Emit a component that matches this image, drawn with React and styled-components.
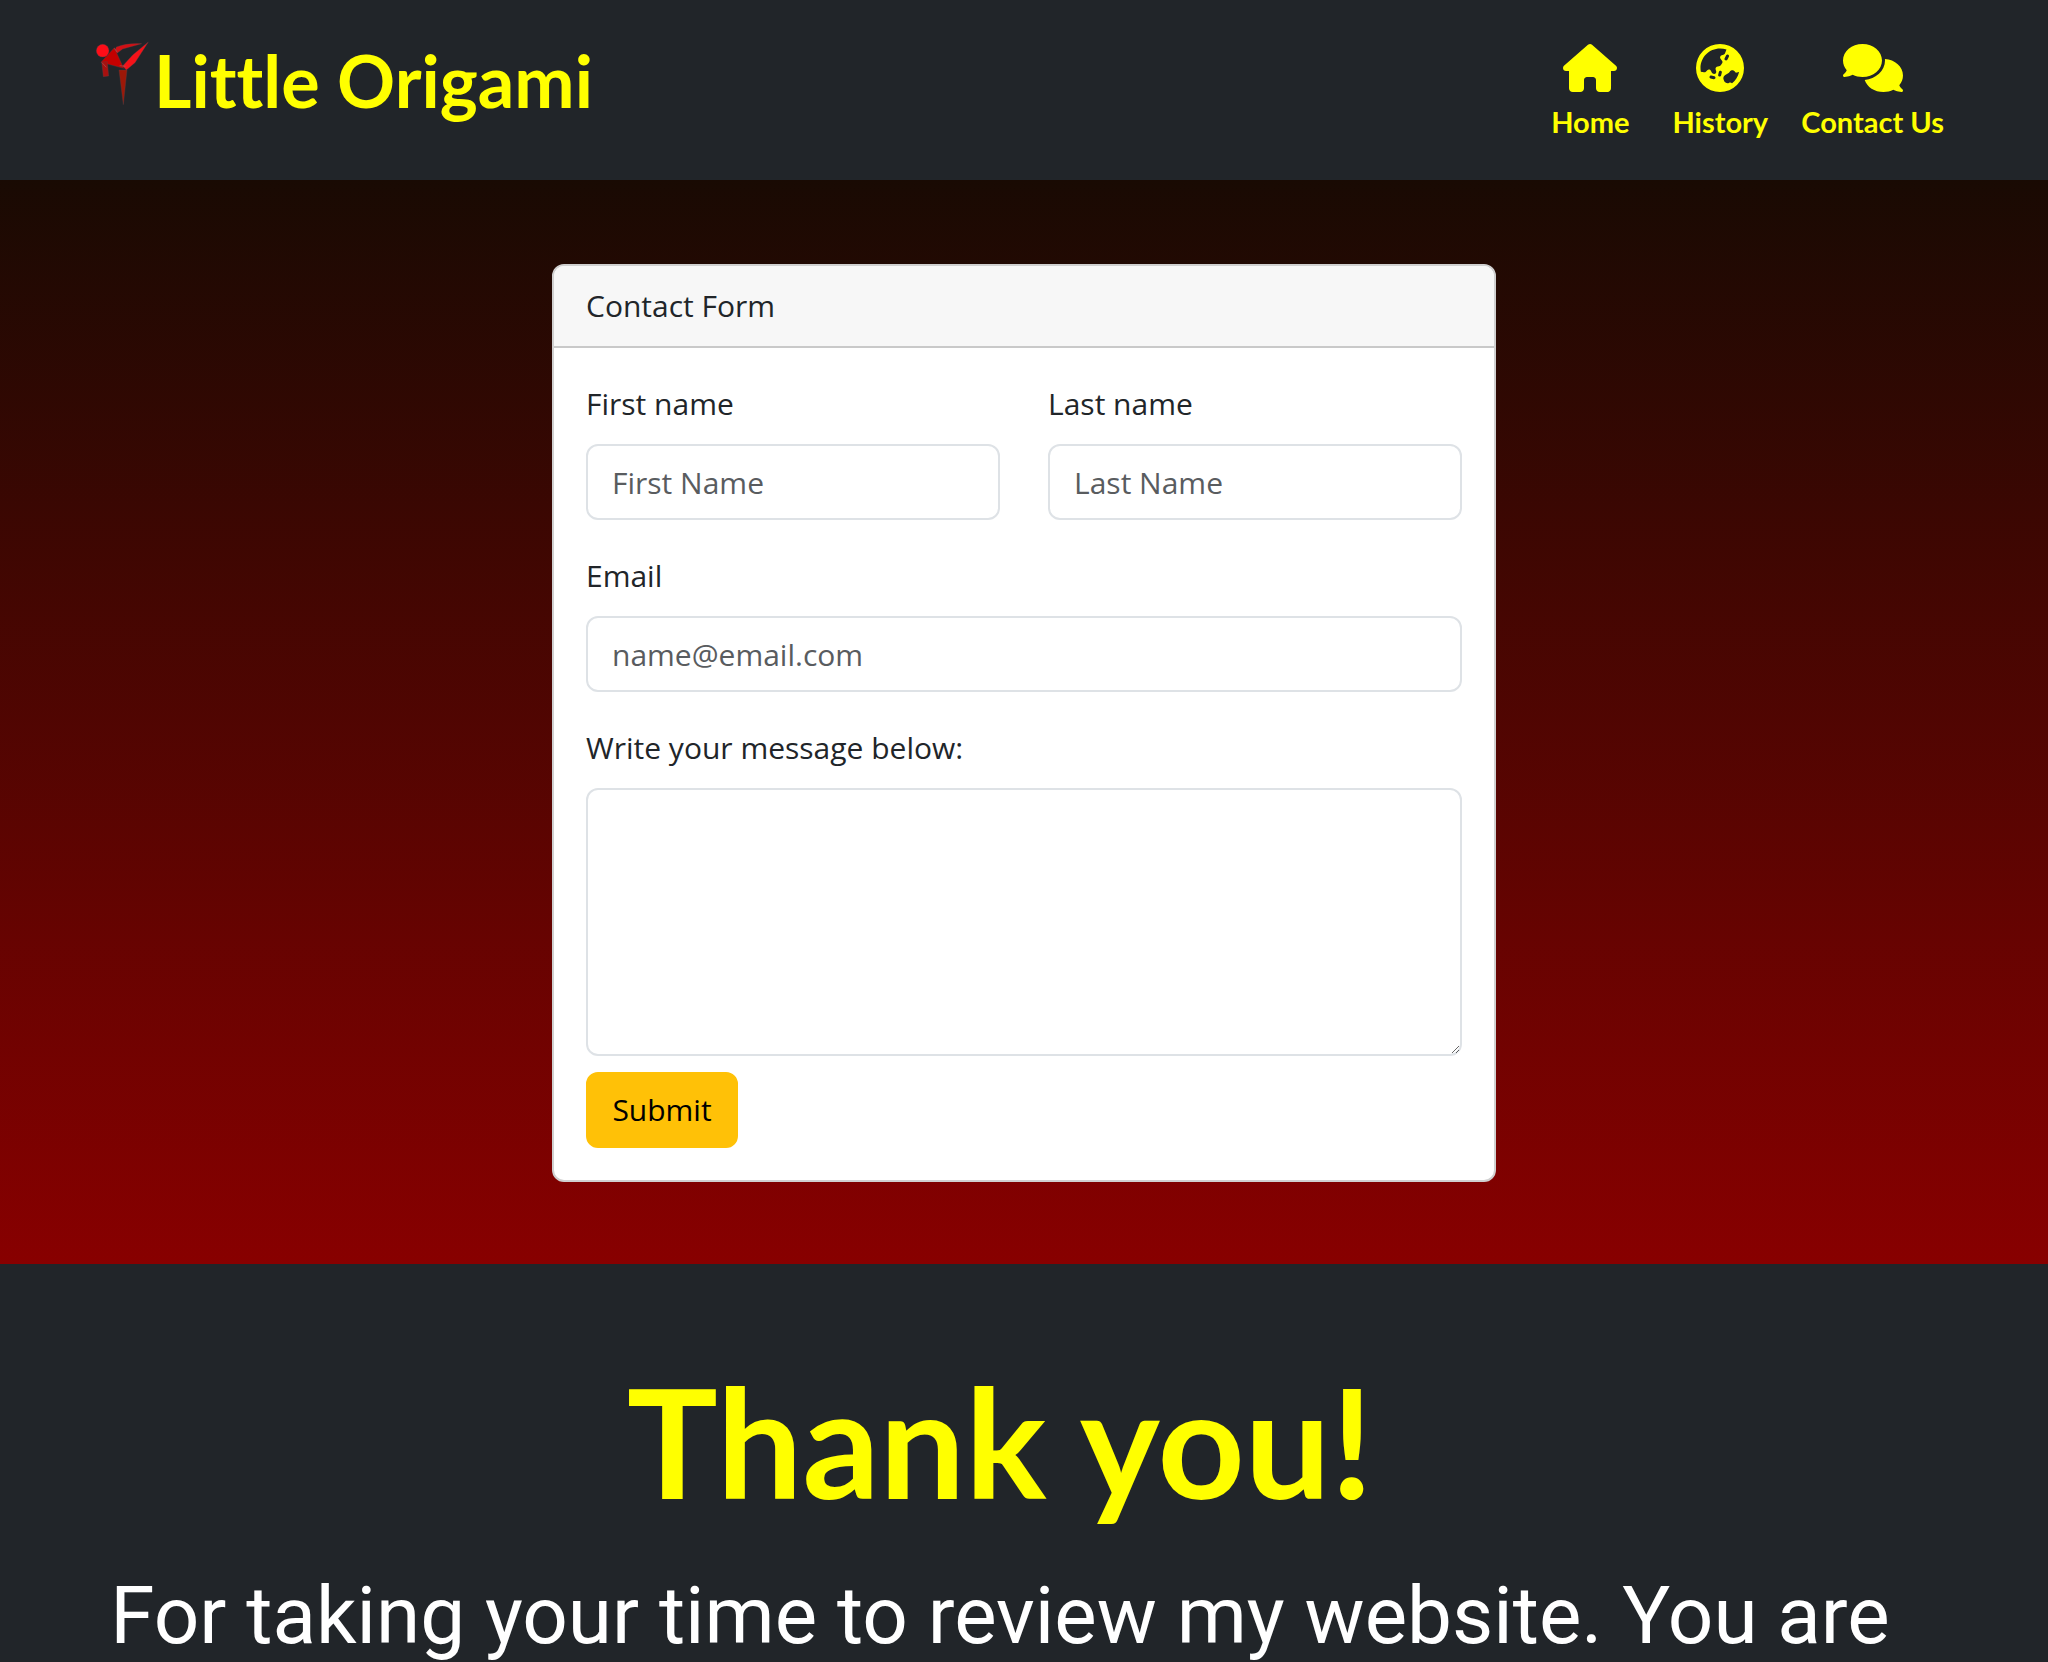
import React from "react";
import styled, { createGlobalStyle } from "styled-components";
import { FaHouse, FaEarthAsia, FaComments } from "react-icons/fa6";

const GlobalStyle = createGlobalStyle`
  *, *::before, *::after { box-sizing: border-box; }
  body {
    margin: 0;
    background: #212529;
    color: #212529;
    font-family: "Open Sans", "Noto Sans", sans-serif;
    font-size: 30px;
    line-height: 48px;
  }
`;

const display = `"Lato", sans-serif`;

const Header = styled.header`
  display: flex;
  justify-content: space-between;
  align-items: flex-start;
  min-height: 180px;
  padding: 40px 104px 32px 92px;
  background: #212529;
`;

const Brand = styled.a`
  display: flex;
  gap: 4px;
  color: #ffff00;
  font-family: ${display};
  font-size: 72px;
  font-weight: 700;
  font-variant-ligatures: none;
  line-height: 80px;
  text-decoration: none;
  white-space: nowrap;
`;

const Logo = styled.svg`
  width: 58px;
  height: 67px;
`;

const Nav = styled.nav`
  display: flex;
  gap: 32px;
  padding-top: 4px;
`;

const NavLink = styled.a`
  display: flex;
  flex-direction: column;
  align-items: center;
  gap: 8px;
  min-width: 98px;
  color: #ffff00;
  font-family: ${display};
  font-size: 29px;
  font-weight: 700;
  line-height: 44px;
  text-decoration: none;
  white-space: nowrap;

  svg {
    width: ${(props) => props.$iconWidth}px;
    height: 48px;
  }
`;

const Main = styled.main`
  padding: 84px 24px 82px;
  background: linear-gradient(#190a03, #880000);
`;

const Card = styled.section`
  max-width: 944px;
  margin: 0 auto;
  overflow: hidden;
  border: 2px solid #d0d0d0;
  border-radius: 12px;
  background: #fff;
`;

const CardHeader = styled.div`
  padding: 16px 32px;
  border-bottom: 2px solid #c9c9c9;
  background: #f7f7f7;
`;

const Form = styled.form`
  display: flex;
  flex-direction: column;
  gap: 32px;
  padding: 32px;
`;

const Row = styled.div`
  display: grid;
  grid-template-columns: 1fr 1fr;
  gap: 48px;
`;

const Stack = styled.div`
  display: flex;
  flex-direction: column;
  align-items: flex-start;
  gap: 16px;
`;

const Input = styled.input`
  width: 100%;
  height: 76px;
  padding: 12px 24px;
  border: 2px solid #dee2e6;
  border-radius: 12px;
  background: #fff;
  color: #212529;
  font: inherit;

  &::placeholder {
    color: #595c5f;
    opacity: 1;
  }
`;

const TextArea = styled.textarea`
  display: block;
  width: 100%;
  height: 268px;
  padding: 12px 24px;
  border: 2px solid #dee2e6;
  border-radius: 12px;
  background: #fff;
  color: #212529;
  font: inherit;
  resize: vertical;
`;

const Submit = styled.button`
  min-width: 152px;
  height: 76px;
  padding: 12px 24px;
  border: 2px solid #ffc107;
  border-radius: 12px;
  background: #ffc107;
  color: #000;
  font: inherit;
`;

const Footer = styled.footer`
  padding: 88px 144px 0 96px;
  background: #212529;
  color: #fff;
  text-align: center;
`;

const Thanks = styled.h1`
  margin: 0 0 44px;
  color: #ffff00;
  font-family: ${display};
  font-size: 152px;
  font-weight: 700;
  line-height: 176px;
`;

const Note = styled.p`
  margin: 0;
  font-family: Roboto, sans-serif;
  font-size: 80px;
  line-height: 88px;
`;

function KickerLogo() {
  return (
    <Logo viewBox="36 30 174 201" aria-hidden="true">
      <g stroke="#5d4245" strokeWidth="1" strokeLinejoin="round">
        <path d="M103 65L109 51Q140 39 185 41L128 57L112 69Z" fill="#d20f14" />
        <path d="M128 108L158 75L205 36L165 98L139 120Z" fill="#f51219" />
        <path d="M103 53L131 115L63 97Z" fill="#c40000" />
        <path d="M65 96L82 95L86 138L70 140Z" fill="#a8100f" />
        <path d="M117 120H141L130 224Z" fill="#9c1808" />
        <circle cx="68" cy="62" r="19" fill="#ff0d18" />
      </g>
      <path d="M66 98L79 112M103 55L112 67M119 107L137 109" stroke="#a05a58" strokeWidth="2" />
    </Logo>
  );
}

const links = [
  { label: "Home", Icon: FaHouse, width: 54 },
  { label: "History", Icon: FaEarthAsia, width: 48 },
  { label: "Contact Us", Icon: FaComments, width: 60 },
];

export default function App() {
  return (
    <>
      <GlobalStyle />
      <Header>
        <Brand href="#home">
          <KickerLogo />
          <span>Little Origami</span>
        </Brand>
        <Nav>
          {links.map(({ label, Icon, width }) => (
            <NavLink key={label} href="#" $iconWidth={width}>
              <Icon aria-hidden="true" />
              <span>{label}</span>
            </NavLink>
          ))}
        </Nav>
      </Header>
      <Main>
        <Card>
          <CardHeader>Contact Form</CardHeader>
          <Form onSubmit={(event) => event.preventDefault()}>
            <Row>
              <Stack>
                <label htmlFor="first">First name</label>
                <Input id="first" type="text" placeholder="First Name" />
              </Stack>
              <Stack>
                <label htmlFor="last">Last name</label>
                <Input id="last" type="text" placeholder="Last Name" />
              </Stack>
            </Row>
            <Stack>
              <label htmlFor="email">Email</label>
              <Input id="email" type="email" placeholder="name@email.com" />
            </Stack>
            <Stack>
              <label htmlFor="message">Write your message below:</label>
              <TextArea id="message" />
              <Submit type="submit">Submit</Submit>
            </Stack>
          </Form>
        </Card>
      </Main>
      <Footer>
        <Thanks>Thank you!</Thanks>
        <Note>For taking your time to review my website. You are</Note>
      </Footer>
    </>
  );
}
